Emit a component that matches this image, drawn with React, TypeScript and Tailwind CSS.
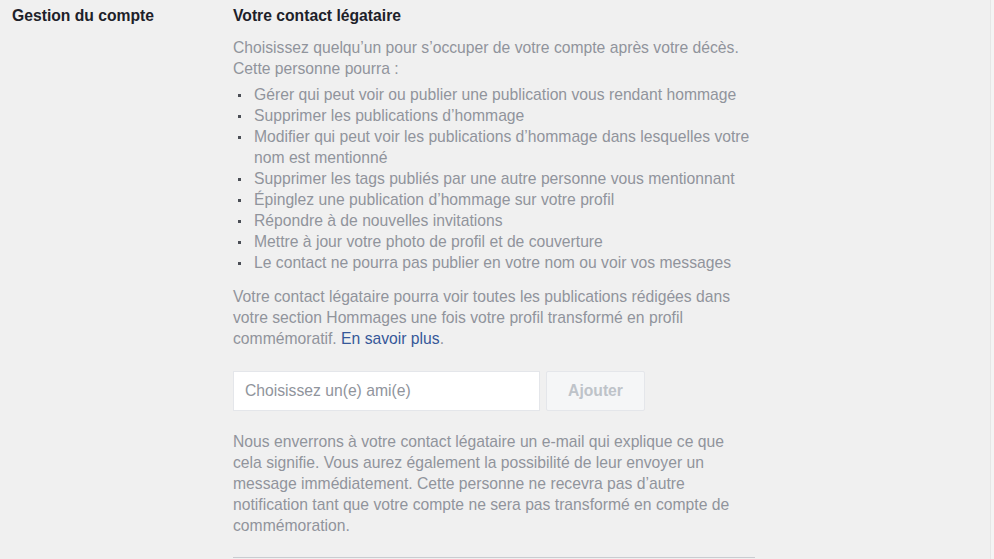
const ITEMS = [
  'Gérer qui peut voir ou publier une publication vous rendant hommage',
  'Supprimer les publications d’hommage',
  'Modifier qui peut voir les publications d’hommage dans lesquelles votre nom est mentionné',
  'Supprimer les tags publiés par une autre personne vous mentionnant',
  'Épinglez une publication d’hommage sur votre profil',
  'Répondre à de nouvelles invitations',
  'Mettre à jour votre photo de profil et de couverture',
  'Le contact ne pourra pas publier en votre nom ou voir vos messages',
];

export default function App() {
  return (
    <div className="flex h-[559px] w-[994px] overflow-hidden bg-[#f0f0f0] font-['Liberation_Sans',Arial,sans-serif] text-[15.7px] leading-[21px]">
      <div className="flex flex-1">
        <div className="w-[233px] shrink-0 pl-3 pt-[4.5px] font-bold text-[#1d2129]">Gestion du compte</div>

        <div className="w-[522px] pt-[4.5px]">
          <h2 className="font-bold text-[#1d2129]">Votre contact légataire</h2>

          <div className="mt-[11px] text-[#90949c]">
            <p>
              Choisissez quelqu’un pour s’occuper de votre compte après votre décès.
              <br />
              Cette personne pourra :
            </p>

            <ul className="mt-[5px]">
              {ITEMS.map((item) => (
                <li key={item} className="flex">
                  <span className="flex w-[21px] shrink-0 pl-[5px] pt-[10px]">
                    <span className="h-[3px] w-[3px] bg-[#4b4f56]" />
                  </span>
                  <span>{item}</span>
                </li>
              ))}
            </ul>

            <p className="mt-[13px]">
              Votre contact légataire pourra voir toutes les publications rédigées dans votre section Hommages une fois
              votre profil transformé en profil commémoratif.{' '}
              <a href="#" className="text-[#365899]">
                En savoir plus
              </a>
              .
            </p>

            <div className="mt-[22px] flex gap-[6px]">
              <input
                placeholder="Choisissez un(e) ami(e)"
                className="h-10 w-[307px] border border-[#e4e6ea] bg-white px-[11px] text-[15.7px] text-[#1d2129] outline-none placeholder:text-[#90949c]"
              />
              <button
                disabled
                className="h-10 w-[99px] rounded-[2px] border border-[#e4e6ea] bg-[#f5f6f7] text-[15.7px] font-bold text-[#bec3c9]"
              >
                Ajouter
              </button>
            </div>

            <p className="mt-5">
              Nous enverrons à votre contact légataire un e-mail qui explique ce que cela signifie. Vous aurez également la
              possibilité de leur envoyer un message immédiatement. Cette personne ne recevra pas d’autre notification tant
              que votre compte ne sera pas transformé en compte de commémoration.
            </p>

            <div className="mt-[21px] border-t border-[#c9ccd1]" />
          </div>
        </div>
      </div>
      <div className="w-[4px] border-l border-[#e6e6e6] bg-[#f4f4f4]" />
    </div>
  );
}
